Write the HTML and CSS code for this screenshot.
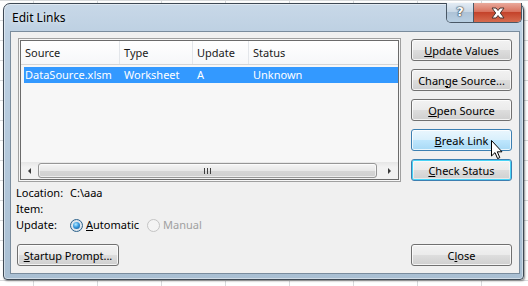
FILE: index.html
```html
<!DOCTYPE html>
<html lang="en">
<head>
  <meta charset="UTF-8">
  <title>Edit Links</title>
  <link rel="stylesheet" href="styles.css">
</head>
<body>
  <div class="window">
    <div class="titlebar">
      <span class="title">Edit Links</span>
      <div class="caption">
        <span class="cap-help">?</span>
        <span class="cap-close">
          <svg width="16" height="12" viewBox="0 0 16 12">
            <path d="M2 1 H6 L8 3.5 L10 1 H14 L10.3 6 L14 11 H10 L8 8.5 L6 11 H2 L5.7 6 Z" fill="#fff" stroke="#4a3530" stroke-width="1"/>
          </svg>
        </span>
      </div>
    </div>

    <div class="client">
      <div class="main">
        <div class="left">
          <div class="listbox">
            <div class="listinner">
              <div class="header">
                <div class="col c1">Source</div>
                <div class="col c2">Type</div>
                <div class="col c3">Update</div>
                <div class="col c4">Status</div>
              </div>
              <div class="rows">
                <div class="row selected">
                  <div class="cell c1">DataSource.xlsm</div>
                  <div class="cell c2">Worksheet</div>
                  <div class="cell c3">A</div>
                  <div class="cell c4">Unknown</div>
                </div>
              </div>
              <div class="hscroll">
                <span class="sb-btn"><span class="tri tri-left"></span></span>
                <div class="thumb"><span class="grip"></span></div>
                <span class="sb-btn"><span class="tri tri-right"></span></span>
              </div>
            </div>
          </div>

          <div class="info">
            <div class="info-row"><span class="lbl">Location:</span><span>C:\aaa</span></div>
            <div class="info-row"><span class="lbl">Item:</span></div>
            <div class="info-row">
              <span class="lbl">Update:</span>
              <span class="radio on"></span><span class="opt"><u>A</u>utomatic</span>
              <span class="radio off"></span><span class="opt disabled">Manual</span>
            </div>
          </div>
        </div>

        <div class="actions">
          <button class="btn"><u>U</u>pdate Values</button>
          <button class="btn">Chan<u>g</u>e Source...</button>
          <button class="btn"><u>O</u>pen Source</button>
          <button class="btn hover"><u>B</u>reak Link
            <svg class="pointer" width="13" height="20" viewBox="0 0 13 20">
              <path d="M0.5 0.5 V16 L4 12.6 L6.6 18.6 L8.8 17.6 L6.3 11.8 H11 Z" fill="#fff" stroke="#000" stroke-width="1" stroke-linejoin="round"/>
            </svg>
          </button>
          <button class="btn default"><u>C</u>heck Status</button>
        </div>
      </div>

      <div class="footer">
        <button class="btn startup"><u>S</u>tartup Prompt...</button>
        <button class="btn">C<u>l</u>ose</button>
      </div>
    </div>
  </div>
</body>
</html>
```

FILE: styles.css
```css
body {
  margin: 0;
  width: 528px;
  height: 286px;
  overflow: hidden;
  background-color: #fff;
  background-image:
    linear-gradient(to right, #d8dadc 1px, transparent 1px),
    linear-gradient(to bottom, #d8dadc 1px, transparent 1px);
  background-size: 64px 20px;
  background-position: 33px 0;
  font-family: "Noto Sans", "DejaVu Sans", sans-serif;
  font-size: 11px;
  color: #000;
}

.window {
  margin: 3px 0 0 3px;
  width: 521px;
  height: 277px;
  box-sizing: border-box;
  border: 1px solid #3e4955;
  border-radius: 7px 7px 4px 4px;
  background: linear-gradient(180deg, #c8d8e8 0, #bdd0e2 30px, #a9bfd3 100%);
  box-shadow: inset 0 0 0 1px rgba(255,255,255,.45), 1px 1px 2px rgba(0,0,0,.45);
  padding: 0 3px 5px 6px;
  display: flex;
  flex-direction: column;
}

.titlebar {
  height: 27px;
  display: flex;
  align-items: flex-start;
  justify-content: space-between;
}
.title {
  line-height: 27px;
  padding-left: 2px;
  font-size: 12px;
  color: #000;
  text-shadow: 0 0 6px rgba(255,255,255,.9);
}
.caption {
  display: flex;
  margin-top: -1px;
  margin-right: -2px;
  height: 19px;
  border: 1px solid #4a5866;
  border-top: none;
  border-radius: 0 0 5px 5px;
  overflow: hidden;
}
.cap-help {
  width: 26px;
  border-right: 1px solid #4a5866;
  background: linear-gradient(#e2ebf4 0, #c9d8e6 45%, #aec3d7 50%, #b9cfe2 100%);
  color: #fff;
  font: bold 13px "DejaVu Sans", sans-serif;
  line-height: 18px;
  text-align: center;
  text-shadow: 0 0 1px #2d3a47, 0 0 1px #2d3a47, 0 0 2px #2d3a47;
}
.cap-close {
  width: 47px;
  background: linear-gradient(#e9a99b 0, #d9735f 45%, #c4432b 50%, #d66b4f 100%);
  display: flex;
  align-items: center;
  justify-content: center;
}

.client {
  flex: 1;
  border: 1px solid #7a8c9d;
  background: #f0f0f0;
  padding: 6px 7px 7px 7px;
  display: flex;
  flex-direction: column;
}
.main {
  display: flex;
  justify-content: space-between;
}

.listbox {
  width: 383px;
  height: 144px;
  box-sizing: border-box;
  border: 1px solid #a0a0a0;
  padding: 1px;
  background: #f7f7f7;
}
.listinner {
  height: 100%;
  box-sizing: border-box;
  border: 1px solid #6b6b6b;
  background: #f7f7f7;
  display: flex;
  flex-direction: column;
}
.header {
  height: 24px;
  display: flex;
  background: linear-gradient(#ffffff, #f6f7f9);
  border-bottom: 1px solid #d5d5d5;
  box-sizing: border-box;
}
.col {
  line-height: 24px;
  padding-left: 4px;
  border-right: 1px solid #e3e6ea;
  box-sizing: border-box;
  color: #1a1a1a;
}
.col.c1 { width: 99px; }
.col.c2 { width: 73px; }
.col.c3 { width: 56px; }
.col.c4 { flex: 1; border-right: none; }

.rows { flex: 1; }
.row {
  display: flex;
  margin: 2px 0 0 3px;
  height: 16px;
  line-height: 16px;
}
.row.selected {
  background: #3399ff;
  color: #fff;
}
.cell { box-sizing: border-box; padding-left: 4px; }
.cell.c1 { width: 96px; padding-left: 1px; }
.cell.c2 { width: 73px; }
.cell.c3 { width: 56px; }
.cell.c4 { flex: 1; }

.hscroll {
  height: 17px;
  display: flex;
  align-items: center;
  background: linear-gradient(#e6e6e6, #f2f2f2 30%, #f2f2f2);
}
.sb-btn {
  width: 17px;
  height: 17px;
  display: flex;
  align-items: center;
  justify-content: center;
}
.tri { width: 0; height: 0; border-top: 3px solid transparent; border-bottom: 3px solid transparent; }
.tri-left { border-right: 3px solid #3b3b3b; }
.tri-right { border-left: 3px solid #3b3b3b; }
.thumb {
  flex: 1;
  height: 15px;
  margin-right: 4px;
  box-sizing: border-box;
  border: 1px solid #969696;
  border-radius: 3px;
  background: linear-gradient(#f5f5f5 0, #e8e8e8 50%, #d6d6d6 51%, #d0d0d0 100%);
  box-shadow: inset 0 0 0 1px rgba(255,255,255,.6);
  display: flex;
  align-items: center;
  justify-content: center;
}
.grip {
  width: 7px;
  height: 6px;
  background: repeating-linear-gradient(to right, #3e3e3e 0 1px, transparent 1px 3px);
}

.info { margin: 3px 0 0 -2px; }
.info-row {
  display: flex;
  align-items: center;
  height: 16px;
  line-height: 16px;
}
.lbl { width: 54px; }
.radio {
  width: 13px;
  height: 13px;
  box-sizing: border-box;
  border-radius: 50%;
  display: flex;
  align-items: center;
  justify-content: center;
}
.radio.on {
  border: 1px solid #2c628b;
  background: radial-gradient(#f4f8fb, #cfd9e2);
}
.radio.on::after {
  content: "";
  width: 7px;
  height: 7px;
  border-radius: 50%;
  background: radial-gradient(circle at 40% 35%, #b6ecff 0, #3a9be0 45%, #0f4d86 100%);
}
.radio.off {
  border: 1px solid #c4c4c4;
  background: #f4f4f4;
}
.opt { margin: 0 8px 0 3px; }
.opt.disabled { color: #a0a0a0; }

.actions {
  width: 101px;
  margin-top: 1px;
  display: flex;
  flex-direction: column;
  gap: 8px;
}
.btn {
  position: relative;
  width: 101px;
  height: 22px;
  padding: 0;
  border: 1px solid #707070;
  border-radius: 3px;
  background: linear-gradient(#f2f2f2 0, #ebebeb 48%, #dddddd 52%, #cfcfcf 100%);
  box-shadow: inset 0 0 0 1px rgba(255,255,255,.75);
  font: inherit;
  color: #000;
}
.btn.hover {
  border-color: #3c7fb1;
  background: linear-gradient(#eaf6fd 0, #d9f0fc 48%, #bee6fd 52%, #a7d9f5 100%);
}
.btn.default {
  border-color: #3c7fb1;
  box-shadow: inset 0 0 0 1px #48d3f6, inset 0 0 0 2px rgba(255,255,255,.5);
}
.pointer {
  position: absolute;
  left: 79px;
  top: 10px;
}

.footer {
  margin-top: auto;
  display: flex;
  justify-content: space-between;
}
.btn.startup { margin-left: -1px; width: 102px; }
```
